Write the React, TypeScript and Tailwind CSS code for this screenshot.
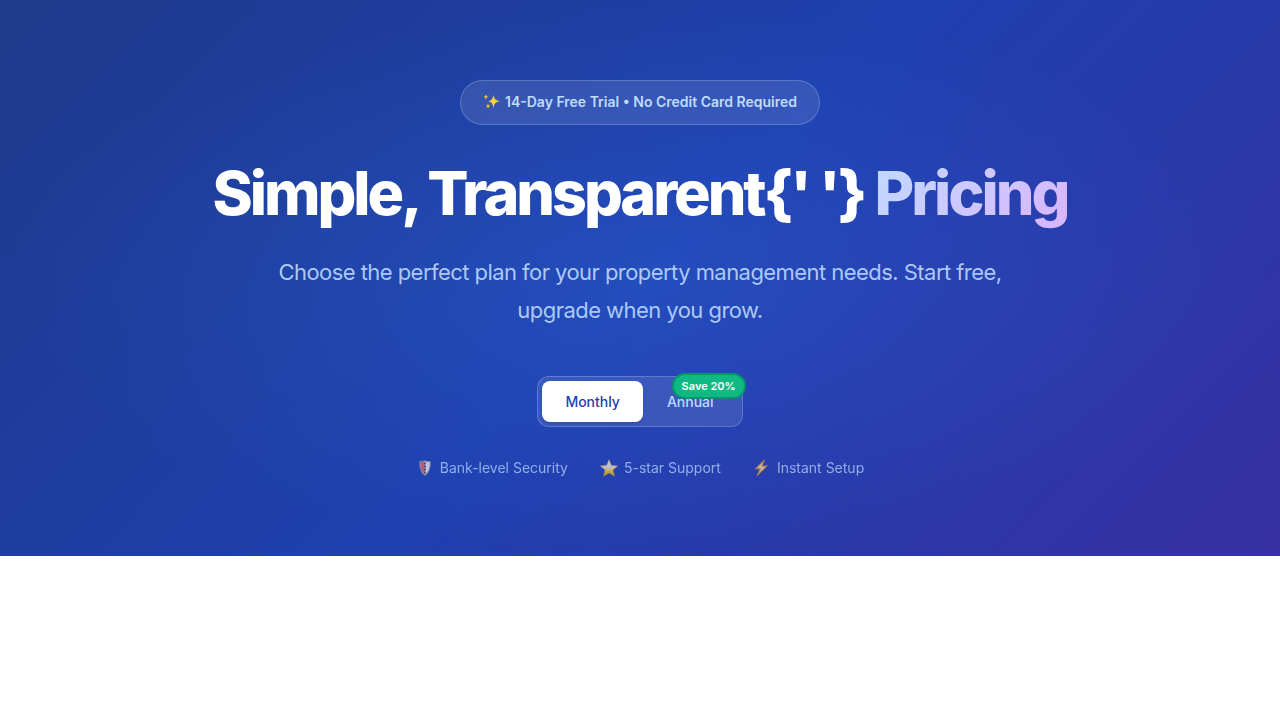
import { useState } from 'react';

function Sparkles() {
  return (
    <svg viewBox="0 0 18 18" className="h-[18px] w-[18px]" aria-hidden="true">
      <path d="M10.4 1.8 Q10.9 7.6 16.6 8.2 Q10.9 8.8 10.4 15 Q9.9 8.8 5.4 8.2 Q9.9 7.6 10.4 1.8Z" fill="#fbd03d" />
      <path d="M2.8 1.2 Q3.1 3.4 5.2 3.8 Q3.1 4.2 2.8 6.6 Q2.5 4.2 .5 3.8 Q2.5 3.4 2.8 1.2Z" fill="#f5b642" />
      <path d="M5 10.6 Q5.3 12.7 7.3 13.1 Q5.3 13.5 5 15.8 Q4.7 13.5 2.8 13.1 Q4.7 12.7 5 10.6Z" fill="#f5b642" />
    </svg>
  );
}

function Shield() {
  return (
    <svg viewBox="0 0 18 18" className="h-[18px] w-[18px]" aria-hidden="true">
      <path d="M3.2 2 Q6 2.3 9 1.2 Q12 2.3 14.8 2 Q15.6 13 9 17 Q2.4 13 3.2 2Z" fill="#8f8f98" />
      <path d="M4.2 2.8 Q7 3.1 9 2.2 Q11 3.1 13.8 2.8 Q14.2 12.2 9 15.8 Q3.8 12.2 4.2 2.8Z" fill="#fafbff" />
      <path d="M4.2 2.8 Q7 3.1 8.6 2.4 V15.2 Q3.8 12 4.2 2.8Z" fill="#f4685c" />
      <path d="M9 3.5 V15" stroke="#58313c" strokeWidth="1.6" strokeDasharray="2 1" />
    </svg>
  );
}

function Star() {
  return (
    <svg viewBox="0 0 18 18" className="h-[18px] w-[18px]" aria-hidden="true">
      <defs>
        <linearGradient id="star-fill" x1="0" y1="0" x2="0" y2="1">
          <stop offset="0.35" stopColor="#fffaf0" />
          <stop offset="0.55" stopColor="#ffee9c" />
          <stop offset="0.75" stopColor="#ffd000" />
          <stop offset="1" stopColor="#f5a800" />
        </linearGradient>
      </defs>
      <path d="M9 .6 L11.4 6.3 L17.7 6.9 L13 11 L14.5 17.3 L9 14 L3.5 17.3 L5 11 L.3 6.9 L6.6 6.3Z" fill="url(#star-fill)" stroke="#e0a020" strokeWidth=".5" strokeLinejoin="round" />
    </svg>
  );
}

function Bolt() {
  return (
    <svg viewBox="0 0 18 18" className="h-[18px] w-[18px]" aria-hidden="true">
      <path d="M11.2 1.4 L2.6 9.8 L7.4 9.5 L4.2 16.4 L14 6.9 L8.8 7.3Z" fill="#fff0b8" stroke="#f09a1a" strokeWidth="1.1" strokeLinejoin="round" />
    </svg>
  );
}

const perks = [
  { label: 'Bank-level Security', Icon: Shield },
  { label: '5-star Support', Icon: Star },
  { label: 'Instant Setup', Icon: Bolt },
];

export default function App() {
  const [annual, setAnnual] = useState(false);
  return (
    <main className="font-['Inter',sans-serif] antialiased">
      <section className="bg-[radial-gradient(ellipse_at_center,rgba(59,130,246,0.2)_0%,transparent_70%),linear-gradient(135deg,#1e3a8a_0%,#1e40af_50%,#3730a3_100%)] px-6 pt-20 pb-[79px]">
        <div className="mx-auto flex max-w-[1000px] flex-col items-center text-center">
          <p className="flex items-center gap-1 rounded-full border border-white/20 bg-white/10 px-[22px] pt-[10px] pb-3 text-sm leading-[21px] font-semibold text-[#bfdbfe]">
            <Sparkles />
            14-Day Free Trial • No Credit Card Required
          </p>
          <h1 className="mt-8 text-[61px] leading-[72px] font-extrabold tracking-tighter text-white">
            {"Simple, Transparent{' '} "}
            <span className="bg-linear-135 from-[#bfdbfe] to-[#d8b4fe] bg-clip-text text-transparent">Pricing</span>
          </h1>
          <p className="mt-6 max-w-[768px] text-[22px] leading-[38px] tracking-tight text-[#bfdbfe]/90">
            Choose the perfect plan for your property management needs. Start free, upgrade when you grow.
          </p>
          <div className="mt-[47px] flex rounded-xl border border-white/20 bg-white/10 p-1 text-sm leading-[21px] font-medium">
            <button
              type="button"
              aria-pressed={!annual}
              onClick={() => setAnnual(false)}
              className="rounded-lg bg-white px-[23px] py-[10px] text-[#1e40af] shadow-sm"
            >
              Monthly
            </button>
            <button type="button" aria-pressed={annual} onClick={() => setAnnual(true)} className="relative rounded-lg px-6 py-[10px] text-[#bfdbfe]">
              Annual
              <span className="absolute -top-2 -right-2 rounded-full border-2 border-[#059669] bg-[#10b981] px-2 py-1 text-[11px] leading-[14px] font-semibold whitespace-nowrap text-white">
                Save 20%
              </span>
            </button>
          </div>
          <ul className="mt-8 flex flex-wrap justify-center gap-8 text-sm leading-[18px] text-[#bfdbfe] opacity-70">
            {perks.map(({ label, Icon }) => (
              <li key={label} className="flex items-center gap-1.5">
                <Icon />
                {label}
              </li>
            ))}
          </ul>
        </div>
      </section>
    </main>
  );
}
